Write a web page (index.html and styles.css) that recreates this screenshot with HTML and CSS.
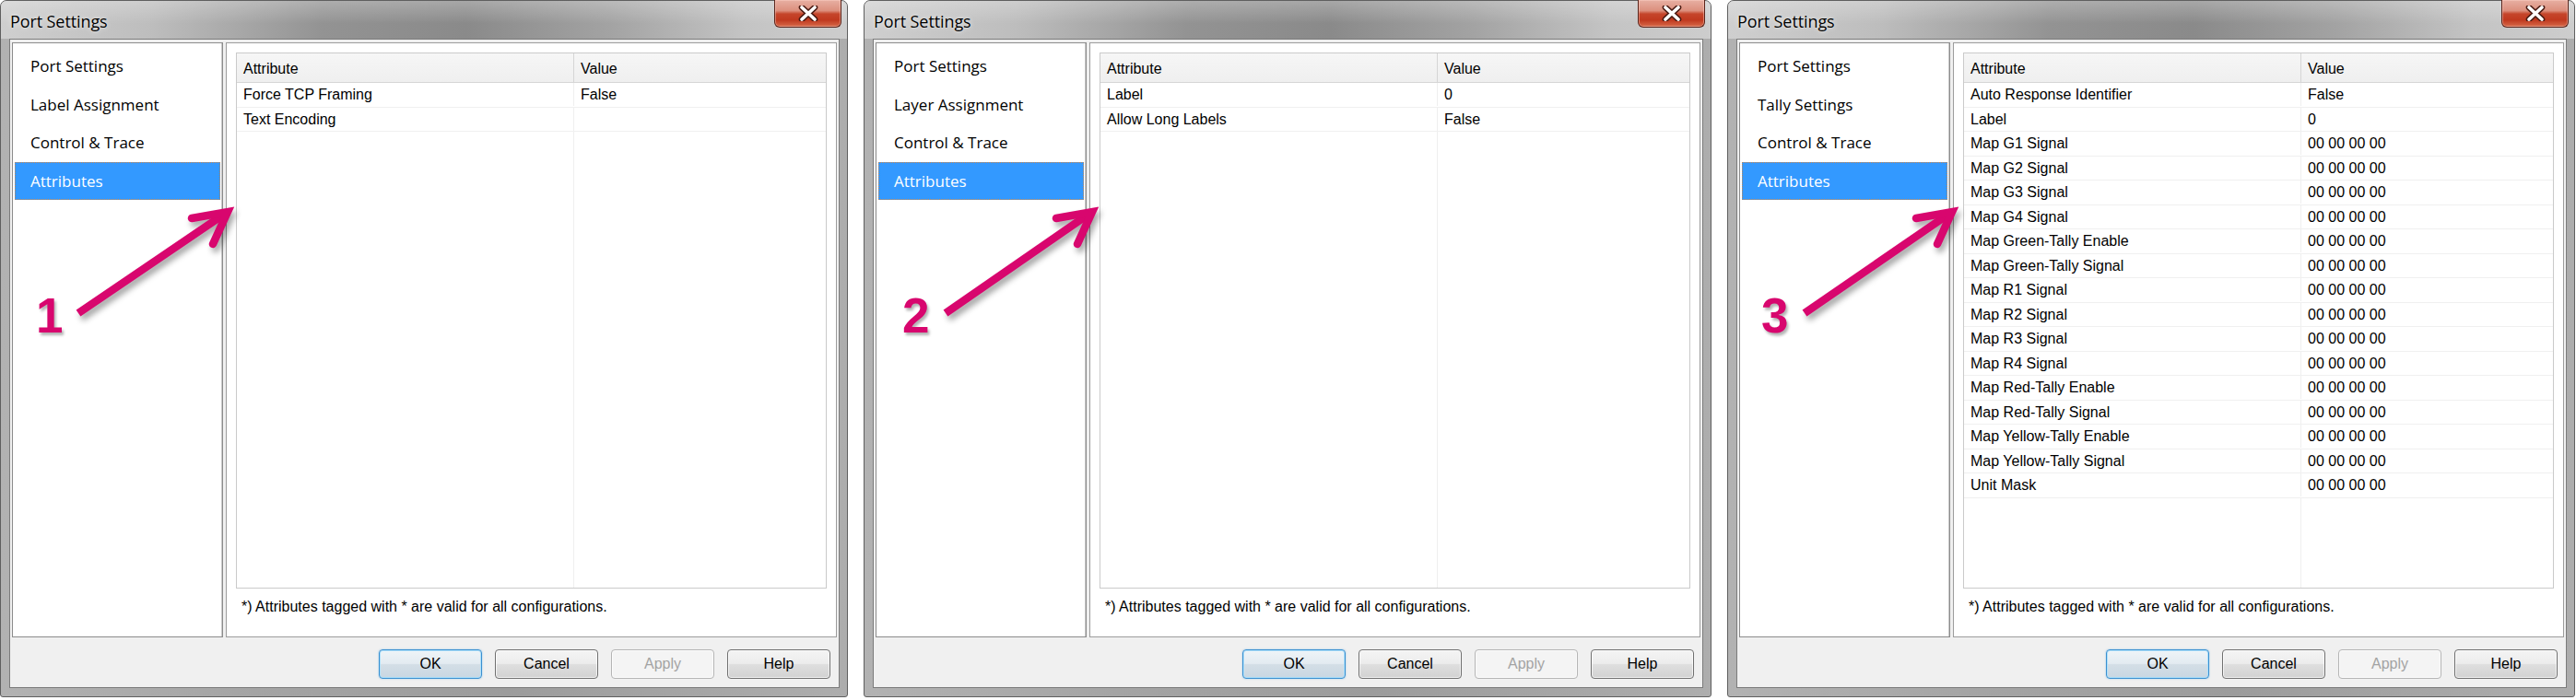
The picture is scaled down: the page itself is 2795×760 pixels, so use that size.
FILE: index.html
```html
<!DOCTYPE html>
<html>
<head>
<meta charset="utf-8">
<title>Port Settings</title>
<link rel="stylesheet" href="styles.css">
</head>
<body>
<div class="screen">

  <section class="dialog">
    <header class="titlebar">
      <span class="title">Port Settings</span>
      <span class="close"><svg width="22" height="17" viewBox="0 0 22 17"><path d="M4 2 L18 15 M18 2 L4 15" stroke="#4a1a12" stroke-width="6.5" stroke-linecap="round"/><path d="M4 2 L18 15 M18 2 L4 15" stroke="#ffffff" stroke-width="3.6" stroke-linecap="round"/></svg></span>
    </header>
    <div class="client">
      <div class="main">
        <nav class="nav">
          <div class="nav-item">Port Settings</div>
          <div class="nav-item">Label Assignment</div>
          <div class="nav-item">Control &amp; Trace</div>
          <div class="nav-item selected">Attributes</div>
        </nav>
        <div class="panel">
          <div class="grid">
            <div class="grid-head"><div class="hcell">Attribute</div><div class="hcell">Value</div></div>
            <div class="grid-body">
              <div class="row"><span class="cell">Force TCP Framing</span><span class="cell">False</span></div>
              <div class="row"><span class="cell">Text Encoding</span><span class="cell"></span></div>
            </div>
          </div>
          <p class="note">*) Attributes tagged with * are valid for all configurations.</p>
        </div>
      </div>
      <div class="buttons">
        <span class="btn default">OK</span>
        <span class="btn">Cancel</span>
        <span class="btn disabled">Apply</span>
        <span class="btn">Help</span>
      </div>
    </div>
    <div class="callout">
      <svg class="arrow" width="300" height="400" viewBox="0 0 300 400"><path d="M84 339 L240 233" stroke="#d8066e" stroke-width="8.5" fill="none"/><path d="M207 236 L246 229 L230 264" stroke="#d8066e" stroke-width="8.5" fill="none" stroke-linecap="round" stroke-linejoin="miter"/></svg>
      <span class="num">1</span>
    </div>
  </section>

  <section class="dialog">
    <header class="titlebar">
      <span class="title">Port Settings</span>
      <span class="close"><svg width="22" height="17" viewBox="0 0 22 17"><path d="M4 2 L18 15 M18 2 L4 15" stroke="#4a1a12" stroke-width="6.5" stroke-linecap="round"/><path d="M4 2 L18 15 M18 2 L4 15" stroke="#ffffff" stroke-width="3.6" stroke-linecap="round"/></svg></span>
    </header>
    <div class="client">
      <div class="main">
        <nav class="nav">
          <div class="nav-item">Port Settings</div>
          <div class="nav-item">Layer Assignment</div>
          <div class="nav-item">Control &amp; Trace</div>
          <div class="nav-item selected">Attributes</div>
        </nav>
        <div class="panel">
          <div class="grid">
            <div class="grid-head"><div class="hcell">Attribute</div><div class="hcell">Value</div></div>
            <div class="grid-body">
              <div class="row"><span class="cell">Label</span><span class="cell">0</span></div>
              <div class="row"><span class="cell">Allow Long Labels</span><span class="cell">False</span></div>
            </div>
          </div>
          <p class="note">*) Attributes tagged with * are valid for all configurations.</p>
        </div>
      </div>
      <div class="buttons">
        <span class="btn default">OK</span>
        <span class="btn">Cancel</span>
        <span class="btn disabled">Apply</span>
        <span class="btn">Help</span>
      </div>
    </div>
    <div class="callout">
      <svg class="arrow" width="300" height="400" viewBox="0 0 300 400"><path d="M88 339 L241 233" stroke="#d8066e" stroke-width="8.5" fill="none"/><path d="M208 236 L247 229 L231 264" stroke="#d8066e" stroke-width="8.5" fill="none" stroke-linecap="round" stroke-linejoin="miter"/></svg>
      <span class="num num2">2</span>
    </div>
  </section>

  <section class="dialog">
    <header class="titlebar">
      <span class="title">Port Settings</span>
      <span class="close"><svg width="22" height="17" viewBox="0 0 22 17"><path d="M4 2 L18 15 M18 2 L4 15" stroke="#4a1a12" stroke-width="6.5" stroke-linecap="round"/><path d="M4 2 L18 15 M18 2 L4 15" stroke="#ffffff" stroke-width="3.6" stroke-linecap="round"/></svg></span>
    </header>
    <div class="client">
      <div class="main">
        <nav class="nav">
          <div class="nav-item">Port Settings</div>
          <div class="nav-item">Tally Settings</div>
          <div class="nav-item">Control &amp; Trace</div>
          <div class="nav-item selected">Attributes</div>
        </nav>
        <div class="panel">
          <div class="grid">
            <div class="grid-head"><div class="hcell">Attribute</div><div class="hcell">Value</div></div>
            <div class="grid-body">
              <div class="row"><span class="cell">Auto Response Identifier</span><span class="cell">False</span></div>
              <div class="row"><span class="cell">Label</span><span class="cell">0</span></div>
              <div class="row"><span class="cell">Map G1 Signal</span><span class="cell">00 00 00 00</span></div>
              <div class="row"><span class="cell">Map G2 Signal</span><span class="cell">00 00 00 00</span></div>
              <div class="row"><span class="cell">Map G3 Signal</span><span class="cell">00 00 00 00</span></div>
              <div class="row"><span class="cell">Map G4 Signal</span><span class="cell">00 00 00 00</span></div>
              <div class="row"><span class="cell">Map Green-Tally Enable</span><span class="cell">00 00 00 00</span></div>
              <div class="row"><span class="cell">Map Green-Tally Signal</span><span class="cell">00 00 00 00</span></div>
              <div class="row"><span class="cell">Map R1 Signal</span><span class="cell">00 00 00 00</span></div>
              <div class="row"><span class="cell">Map R2 Signal</span><span class="cell">00 00 00 00</span></div>
              <div class="row"><span class="cell">Map R3 Signal</span><span class="cell">00 00 00 00</span></div>
              <div class="row"><span class="cell">Map R4 Signal</span><span class="cell">00 00 00 00</span></div>
              <div class="row"><span class="cell">Map Red-Tally Enable</span><span class="cell">00 00 00 00</span></div>
              <div class="row"><span class="cell">Map Red-Tally Signal</span><span class="cell">00 00 00 00</span></div>
              <div class="row"><span class="cell">Map Yellow-Tally Enable</span><span class="cell">00 00 00 00</span></div>
              <div class="row"><span class="cell">Map Yellow-Tally Signal</span><span class="cell">00 00 00 00</span></div>
              <div class="row"><span class="cell">Unit Mask</span><span class="cell">00 00 00 00</span></div>
            </div>
          </div>
          <p class="note">*) Attributes tagged with * are valid for all configurations.</p>
        </div>
      </div>
      <div class="buttons">
        <span class="btn default">OK</span>
        <span class="btn">Cancel</span>
        <span class="btn disabled">Apply</span>
        <span class="btn">Help</span>
      </div>
    </div>
    <div class="callout">
      <svg class="arrow" width="300" height="400" viewBox="0 0 300 400"><path d="M83 339 L237 233" stroke="#d8066e" stroke-width="8.5" fill="none"/><path d="M204 236 L243 229 L227 264" stroke="#d8066e" stroke-width="8.5" fill="none" stroke-linecap="round" stroke-linejoin="miter"/></svg>
      <span class="num num3">3</span>
    </div>
  </section>

</div>
</body>
</html>
```

FILE: styles.css
```css
* {
  box-sizing: border-box;
}

html,
body {
  margin: 0;
  padding: 0;
  background: #ffffff;
}

body {
  width: 2795px;
  height: 760px;
  overflow: hidden;
  font-family: "Liberation Sans", Arial, sans-serif;
  font-size: 16px;
  color: #000;
}

.screen {
  display: flex;
  gap: 17px;
}

/* ---------- window frame ---------- */
.dialog {
  position: relative;
  flex: 0 0 920px;
  width: 920px;
  height: 757px;
  display: flex;
  flex-direction: column;
  border: 1px solid #5f5f5f;
  border-radius: 7px 7px 3px 3px;
  background: linear-gradient(90deg, #b2b2b2 0%, #a4a4a4 30%, #9c9c9c 60%, #adadad 100%);
  padding: 0 8px 9px 9px;
}

.titlebar {
  height: 41px;
  margin: 0 -8px 0 -9px;
  padding: 0 6px 0 10px;
  display: flex;
  align-items: flex-start;
  border-radius: 6px 6px 0 0;
  background:
    linear-gradient(180deg, rgba(255, 255, 255, 0.25) 0%, rgba(255, 255, 255, 0) 60%),
    linear-gradient(90deg, #cfcfcf 0%, #bdbdbd 18%, #939393 38%, #8a8a8a 55%, #a3a3a3 72%, #c4c4c4 88%, #cdcdcd 100%);
}

.title {
  font-family: "Open Sans", "Liberation Sans", sans-serif;
  font-size: 18px;
  line-height: 20px;
  padding-top: 12px;
  color: #000;
  text-shadow: 0 0 6px rgba(255, 255, 255, 0.7), 0 0 2px rgba(255, 255, 255, 0.6);
  letter-spacing: -0.1px;
}

.close {
  margin-left: auto;
  margin-top: -1px;
  width: 73px;
  height: 30px;
  display: flex;
  align-items: center;
  justify-content: center;
  border: 1px solid #5a2218;
  border-top: none;
  border-radius: 0 0 6px 6px;
  background: linear-gradient(180deg, #e7b0a3 0%, #dc8f7d 40%, #c5452b 52%, #c0391f 75%, #d66a4a 100%);
  box-shadow: inset 0 0 0 1px rgba(255, 210, 200, 0.45);
}

/* ---------- client area ---------- */
.client {
  flex: 1;
  display: flex;
  flex-direction: column;
  background: #f0f0f0;
  border: 1px solid #7b7b7b;
  padding: 3px 2px 9px 2px;
}

.main {
  height: 646px;
  display: flex;
  gap: 3px;
}

.nav {
  width: 229px;
  flex: 0 0 229px;
  background: #ffffff;
  border: 1px solid #8c8c8c;
  box-shadow: inset -1px 0 0 #c8c8c8;
  padding: 4px 2px;
  font-family: "Open Sans", "Liberation Sans", sans-serif;
  font-size: 17px;
}

.nav-item {
  height: 41.5px;
  line-height: 41.5px;
  padding-left: 17px;
  color: #000;
  white-space: nowrap;
}

.nav-item.selected {
  background: #3399ff;
  color: #ffffff;
  border: 1px dotted #c9864a;
  line-height: 39.5px;
  padding-left: 16px;
}

.panel {
  flex: 1;
  display: flex;
  flex-direction: column;
  background: #ffffff;
  border: 1px solid #9c9c9c;
  padding: 10px;
}

/* ---------- attribute grid ---------- */
.grid {
  height: 582px;
  display: flex;
  flex-direction: column;
  border: 1px solid #cacaca;
}

.grid-head {
  height: 32px;
  flex: 0 0 32px;
  display: grid;
  grid-template-columns: 366px 1fr;
  background: linear-gradient(180deg, #f6f6f6 0%, #efefef 100%);
  border-bottom: 1px solid #d5d5d5;
}

.hcell {
  padding-left: 7px;
  line-height: 32px;
  padding-top: 1px;
}

.hcell:first-child {
  border-right: 1px solid #d5d5d5;
}

.grid-body {
  flex: 1;
  background: linear-gradient(90deg, transparent 365px, #efefef 365px, #efefef 366px, transparent 366px);
}

.row {
  height: 26.5px;
  display: grid;
  grid-template-columns: 366px 1fr;
  align-items: center;
  border-bottom: 1px solid #f0f0f0;
  background: #ffffff;
}

.row .cell {
  padding-left: 7px;
  white-space: nowrap;
  line-height: 25px;
}

.row .cell:first-child {
  border-right: 1px solid #efefef;
}

.note {
  margin: 10px 0 0 6px;
  line-height: 20px;
  font-size: 16px;
}

/* ---------- buttons ---------- */
.buttons {
  margin-top: 13px;
  display: flex;
  justify-content: flex-end;
  gap: 14px;
  padding-right: 7px;
}

.btn {
  width: 112px;
  height: 32px;
  display: flex;
  align-items: center;
  justify-content: center;
  border: 1px solid #707070;
  border-radius: 4px;
  background: linear-gradient(180deg, #f4f4f4 0%, #ececec 48%, #dedede 52%, #d2d2d2 100%);
  box-shadow: inset 0 0 0 1px rgba(255, 255, 255, 0.7);
  font-size: 16px;
  color: #000;
}

.btn.default {
  border-color: #3a8fd0;
  background: linear-gradient(180deg, #eef4f8 0%, #e3ebf1 48%, #d3dee6 52%, #c9d7e2 100%);
  box-shadow: inset 0 0 0 1px #aee0fa, 0 0 2px rgba(80, 170, 230, 0.6);
}

.btn.disabled {
  border-color: #b5b5b5;
  background: #f4f4f4;
  color: #a3a3a3;
}

/* ---------- annotation overlay ---------- */
.callout {
  position: absolute;
  left: 0;
  top: 0;
  width: 300px;
  height: 400px;
  pointer-events: none;
}

.arrow {
  display: block;
  filter: drop-shadow(3px 5px 3px rgba(0, 0, 0, 0.35));
}

.num {
  position: absolute;
  left: 38px;
  top: 315px;
  font-family: "Liberation Sans", Arial, sans-serif;
  font-weight: bold;
  font-size: 53px;
  line-height: 53px;
  color: #d8066e;
  text-shadow: 2px 3px 3px rgba(0, 0, 0, 0.3);
}

.num2 {
  left: 41px;
}

.num3 {
  left: 36px;
}
```
